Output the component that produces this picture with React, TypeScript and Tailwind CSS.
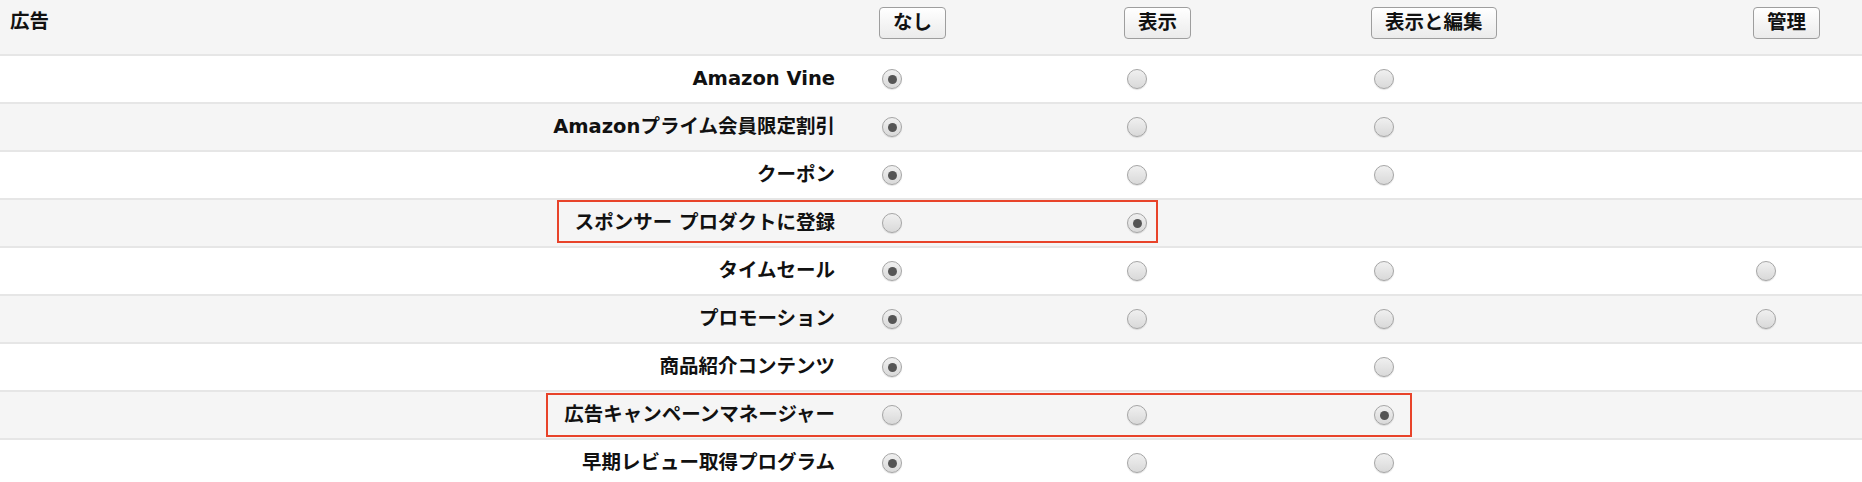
import React from "react";

type Row = {
  label: string;
  // radio state per column: null = no radio, true = selected
  cells: (boolean | null)[];
  marked?: "short" | "long";
};

const rows: Row[] = [
  { label: "Amazon Vine", cells: [true, false, false, null] },
  { label: "Amazonプライム会員限定割引", cells: [true, false, false, null] },
  { label: "クーポン", cells: [true, false, false, null] },
  { label: "スポンサー プロダクトに登録", cells: [false, true, null, null], marked: "short" },
  { label: "タイムセール", cells: [true, false, false, false] },
  { label: "プロモーション", cells: [true, false, false, false] },
  { label: "商品紹介コンテンツ", cells: [true, null, false, null] },
  { label: "広告キャンペーンマネージャー", cells: [false, false, true, null], marked: "long" },
  { label: "早期レビュー取得プログラム", cells: [true, false, false, null] },
];

const headers = ["なし", "表示", "表示と編集", "管理"];

const font = {
  fontFamily: '"DejaVu Sans", "Noto Sans CJK JP", sans-serif',
};

function Radio({ checked }: { checked: boolean }) {
  return (
    <span className="ml-[3px] flex h-[20px] w-[20px] items-center justify-center rounded-full border-[1.5px] border-[#a5a5a5] bg-gradient-to-b from-[#f0f0f0] to-[#d9d9d9] shadow-[0_1px_1px_rgba(0,0,0,0.12)]">
      {checked && <span className="h-[9px] w-[9px] rounded-full bg-[#555]" />}
    </span>
  );
}

export default function App() {
  return (
    <div className="w-[1862px] h-[482px] overflow-hidden bg-white text-[#111]" style={font}>
      {/* header */}
      <div className="grid h-[56px] grid-cols-[879px_245px_247px_382px_1fr] border-b-2 border-[#e6e6e6] bg-[#f5f5f5]">
        <div className="pl-[10px] pt-[7px] text-[19.5px] font-bold">広告</div>
        {headers.map((h) => (
          <div key={h} className="pt-[7px]">
            <button className="h-[32px] rounded-[4px] border border-[#9e9e9e] bg-gradient-to-b from-white to-[#ebebeb] px-[13px] text-[19.5px] font-bold leading-none">
              {h}
            </button>
          </div>
        ))}
      </div>

      {/* rows */}
      {rows.map((r, i) => (
        <div
          key={r.label}
          className={`relative grid h-[48px] grid-cols-[879px_245px_247px_382px_1fr] items-center border-b-2 border-[#e6e6e6] ${
            i % 2 === 1 ? "bg-[#f5f5f5]" : "bg-white"
          }`}
        >
          <div className="pr-[44px] text-right text-[19.5px] font-bold">{r.label}</div>
          {r.cells.map((c, j) => (
            <div key={j} className="flex items-center">
              {c !== null && <Radio checked={c} />}
            </div>
          ))}

          {r.marked === "short" && (
            <div className="pointer-events-none absolute left-[557px] top-0 h-[43px] w-[601px] border-2 border-[#e8432a]" />
          )}
          {r.marked === "long" && (
            <div className="pointer-events-none absolute left-[546px] top-[1px] h-[44px] w-[866px] border-2 border-[#e8432a]" />
          )}
        </div>
      ))}
    </div>
  );
}
